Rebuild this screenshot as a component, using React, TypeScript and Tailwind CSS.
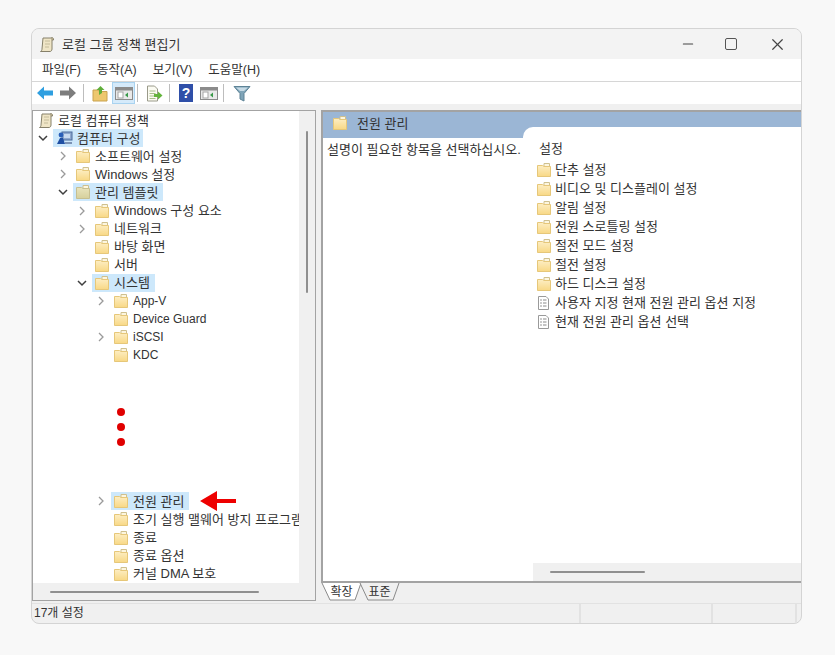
import React from "react";
import { Minus, X } from "lucide-react";

const Folder = ({ dim = false }: { dim?: boolean }) => (
  <svg width="16" height="16" viewBox="0 0 16 16" className="shrink-0">
    <defs>
      <linearGradient id="folderFill" x1="0" y1="0" x2="0" y2="1">
        <stop offset="0" stopColor="#fdeec4" />
        <stop offset="1" stopColor="#f8d885" />
      </linearGradient>
      <linearGradient id="folderDim" x1="0" y1="0" x2="0" y2="1">
        <stop offset="0" stopColor="#e9e4bd" />
        <stop offset="1" stopColor="#d6d09c" />
      </linearGradient>
    </defs>
    <path d="M8 1.5h5.5v3H8z" fill="#fdf6df" stroke="#cfc08e" />
    <path d="M1.5 3.5h5l1.5 1h6.5v10h-13z" fill={dim ? "url(#folderDim)" : "url(#folderFill)"} stroke={dim ? "#c6bf90" : "#e6c779"} />
  </svg>
);

const Scroll = () => (
  <svg width="17" height="17" viewBox="0 0 17 17" className="shrink-0">
    <path d="M5 2h9v11c0 1.5-1 2.5-2 2.5H2.5c1-.5 1.5-1.5 1.5-2.5z" fill="#efe5c6" stroke="#86806a" />
    <path d="M7 5h5M7 8h5M7 11h4" stroke="#c4bb9a" />
    <path d="M13.5 1.5c1.5 0 2 .8 2 2.5h-1.5" fill="#cfc49e" stroke="#86806a" />
  </svg>
);

const Computer = () => (
  <svg width="17" height="16" viewBox="0 0 17 16" className="shrink-0">
    <rect x="6" y="2" width="10" height="8" fill="#8fa9cf" stroke="#4a6a9c" />
    <rect x="8" y="4" width="6" height="4" fill="#c8daf0" />
    <path d="M1 14l3-6h3l2 6z" fill="#1f4fa3" />
    <circle cx="5" cy="5" r="2.4" fill="#2a5fb8" />
    <path d="M9 12h7v2H9z" fill="#7c93b5" />
  </svg>
);

const Policy = () => (
  <svg width="15" height="16" viewBox="0 0 15 16" className="shrink-0">
    <path d="M2.5 1.5h7.5l2.5 2.5v10.5h-10z" fill="#fff" stroke="#9a9a9a" />
    <path d="M4.5 5h1M4.5 8h1M4.5 11h1" stroke="#333" />
    <path d="M7 5h3.5M7 8h3.5M7 11h3.5" stroke="#8a8a8a" />
  </svg>
);

const Chevron = ({ open }: { open?: boolean }) => (
  <svg width="12" height="12" viewBox="0 0 12 12" className="shrink-0">
    {open ? (
      <path d="M2 4l4 4 4-4" fill="none" stroke="#3f3f3f" strokeWidth="1.5" />
    ) : (
      <path d="M4 2l4 4-4 4" fill="none" stroke="#9a9a9a" strokeWidth="1.3" />
    )}
  </svg>
);

const ArrowButton = ({ color, flip }: { color: string; flip?: boolean }) => (
  <svg width="18" height="14" viewBox="0 0 18 14" className={flip ? "rotate-180" : ""}>
    <path d="M1 7l7-6.5v4h9v5H8v4z" fill={color} />
  </svg>
);

const Sep = () => <div className="h-[18px] w-px bg-[#bdbdbd]" />;

const PanelIcon = ({ fill }: { fill: string }) => (
  <svg width="18" height="15" viewBox="0 0 18 15">
    <rect x="0.5" y="1.5" width="17" height="12" fill="#e9e9e9" stroke="#8b8b8b" />
    <path d="M1 2h16v2.5H1z" fill="#8b8b8b" />
    <rect x="3" y="6" width="5" height="6" fill="#fff" stroke="#a5a5a5" />
    <path d="M10 9l3-2.5v5z" fill={fill} />
  </svg>
);

const Toolbar = () => (
  <div className="flex h-[22px] shrink-0 items-center bg-white pl-[4px]">
    <ArrowButton color="#2f9fe0" />
    <div className="w-[5px]" />
    <ArrowButton color="#7d7d7d" flip />
    <div className="w-[6px]" />
    <Sep />
    <svg width="16" height="17" viewBox="0 0 16 17" className="ml-[8px]">
      <path d="M1 5h5l1 1.5h8V16H1z" fill="#edc76e" stroke="#c9a24f" />
      <path d="M7 10V5H4.5L8.5 1l4 4H10v3z" fill="#5fae3a" />
    </svg>
    <div className="ml-[4px] flex h-[22px] w-[23px] items-center justify-center border border-[#a9d3f0] bg-[#d5eafa]">
      <PanelIcon fill="#3a9a4a" />
    </div>
    <div className="w-[2px]" />
    <Sep />
    <svg width="17" height="17" viewBox="0 0 17 17" className="ml-[8px]">
      <path d="M1.5 1h7l3 3v12h-10z" fill="#fbfbf2" stroke="#9a9a8a" />
      <path d="M3.5 6h6M3.5 8.5h6M3.5 11h6M3.5 13.5h6" stroke="#a8bf8a" />
      <path d="M8 9h4V6.5l4.5 4-4.5 4V12H8z" fill="#63b53c" />
    </svg>
    <div className="w-[6px]" />
    <Sep />
    <div className="ml-[9px] flex h-[18px] w-[14px] items-center justify-center bg-[#2f4fa8] text-[14px] font-bold leading-none text-white">
      ?
    </div>
    <div className="w-[7px]" />
    <PanelIcon fill="#3a9a4a" />
    <div className="w-[5px]" />
    <Sep />
    <svg width="18" height="17" viewBox="0 0 18 17" className="ml-[9px]">
      <path d="M1 1.5h16L11 8.5V16l-4-2V8.5z" fill="#7fa4b8" stroke="#5e8396" />
      <path d="M3 2.5h12L11 6H7z" fill="#c8dbe6" />
    </svg>
  </div>
);

type TreeRow = { label: string; level: number; chevron?: "open" | "closed"; selected?: boolean; dim?: boolean; latin?: boolean };

const topRows: TreeRow[] = [
  { label: "소프트웨어 설정", level: 1, chevron: "closed" },
  { label: "Windows 설정", level: 1, chevron: "closed" },
  { label: "관리 템플릿", level: 1, chevron: "open", selected: true, dim: true },
  { label: "Windows 구성 요소", level: 2, chevron: "closed" },
  { label: "네트워크", level: 2, chevron: "closed" },
  { label: "바탕 화면", level: 2 },
  { label: "서버", level: 2 },
  { label: "시스템", level: 2, chevron: "open", selected: true },
  { label: "App-V", level: 3, chevron: "closed", latin: true },
  { label: "Device Guard", level: 3, latin: true },
  { label: "iSCSI", level: 3, chevron: "closed", latin: true },
  { label: "KDC", level: 3, latin: true },
];

const bottomRows: TreeRow[] = [
  { label: "전원 관리", level: 3, chevron: "closed", selected: true },
  { label: "조기 실행 맬웨어 방지 프로그램", level: 3 },
  { label: "종료", level: 3 },
  { label: "종료 옵션", level: 3 },
  { label: "커널 DMA 보호", level: 3 },
];

const indent: Record<number, string> = { 1: "pl-[24px]", 2: "pl-[43px]", 3: "pl-[62px]" };

const Row = ({ row }: { row: TreeRow }) => (
  <div className={`flex h-[18.1px] items-center whitespace-nowrap ${indent[row.level]}`}>
    <div className="w-[16px] shrink-0">{row.chevron && <Chevron open={row.chevron === "open"} />}</div>
    <div className={`flex h-[18px] items-center gap-[4px] pl-[2px] pr-[5px] ${row.selected ? "bg-[#cde8fb]" : ""}`}>
      <Folder dim={row.dim} />
      <span className={row.latin ? "text-[12px]" : ""}>{row.label}</span>
    </div>
  </div>
);

const listItems = ["단추 설정", "비디오 및 디스플레이 설정", "알림 설정", "전원 스로틀링 설정", "절전 모드 설정", "절전 설정", "하드 디스크 설정"];
const policyItems = ["사용자 지정 현재 전원 관리 옵션 지정", "현재 전원 관리 옵션 선택"];

const Tab = ({ label, active }: { label: string; active?: boolean }) => (
  <div className="relative flex h-[18px] w-[41px] shrink-0 items-center justify-center">
    <svg width="41" height="18" viewBox="0 0 41 18" className="absolute left-0 top-0">
      <path d="M1 0l8 17h25l6-17" fill={active ? "#fff" : "#f0f0f0"} stroke="#8a8a8a" />
    </svg>
    <span className="relative text-[12px]">{label}</span>
  </div>
);

export default function App() {
  return (
    <div className="h-[655px] w-[835px] overflow-hidden bg-[#f8f8f8] pl-[31px] pt-[28px] font-['Liberation_Sans','Noto_Sans_CJK_KR',sans-serif] text-[13px] leading-none text-[#333]">
      <div className="flex h-[596px] w-[771px] flex-col overflow-hidden rounded-lg border border-[#d4d4d4] bg-[#f0f0f0]">
        {/* Title bar */}
        <div className="flex h-[30px] shrink-0 items-center bg-[#f3f3f3] pl-[6px]">
          <Scroll />
          <span className="ml-[7px] flex-1">로컬 그룹 정책 편집기</span>
          <Minus size={16} strokeWidth={1.6} className="mr-[29px] text-[#444]" />
          <div className="mr-[31px] h-[12px] w-[12px] rounded-[2px] border-[1.5px] border-[#555]" />
          <X size={19} strokeWidth={1.5} className="mr-[14px] text-[#444]" />
        </div>

        {/* Menu */}
        <div className="flex h-[23px] shrink-0 items-center gap-[16px] border-b border-[#d6d6d6] bg-white pl-[10px] text-[12.5px]">
          <span>파일(F)</span>
          <span>동작(A)</span>
          <span>보기(V)</span>
          <span>도움말(H)</span>
        </div>

        <Toolbar />

        {/* Panes */}
        <div className="mt-[6px] flex h-[491px] shrink-0 gap-[5px]">
          <div className="flex w-[284px] shrink-0 flex-col border border-[#a3a3a3] bg-[#f0f0f0]">
            <div className="flex min-h-0 flex-1">
              <div className="w-[266px] overflow-hidden bg-white">
                <div className="flex h-[18.1px] items-center gap-[4px] whitespace-nowrap pl-[4px]">
                  <Scroll />
                  <span>로컬 컴퓨터 정책</span>
                </div>
                <div className="flex h-[18.1px] items-center pl-[4px]">
                  <div className="w-[16px]">
                    <Chevron open />
                  </div>
                  <div className="flex h-[18px] items-center gap-[4px] bg-[#cde8fb] pl-[3px] pr-[3px]">
                    <Computer />
                    <span>컴퓨터 구성</span>
                  </div>
                </div>
                {topRows.map((row) => (
                  <Row key={row.label} row={row} />
                ))}
                <div className="flex h-[128px] flex-col gap-[7px] pl-[84px] pt-[44px]">
                  <div className="h-[8px] w-[8px] rounded-full bg-[#e00000]" />
                  <div className="h-[8px] w-[8px] rounded-full bg-[#e00000]" />
                  <div className="h-[8px] w-[8px] rounded-full bg-[#e00000]" />
                </div>
                <div className="relative">
                  {bottomRows.map((row) => (
                    <Row key={row.label} row={row} />
                  ))}
                  <svg width="36" height="20" viewBox="0 0 36 20" className="absolute left-[167px] top-[-1px]">
                    <path d="M0 10L17 0v8h19v4H17v8z" fill="#ee0000" />
                  </svg>
                </div>
              </div>
              <div className="flex flex-1 justify-center pt-[20px]">
                <div className="h-[162px] w-[2px] rounded-full bg-[#8f8f8f]" />
              </div>
            </div>
            <div className="flex h-[17px] shrink-0 items-center pl-[17px]">
              <div className="h-[2px] w-[209px] rounded-full bg-[#8f8f8f]" />
            </div>
          </div>

          <div className="flex min-w-0 flex-1 flex-col">
            <div className="flex min-h-0 flex-1 flex-col border-l-2 border-t-2 border-[#a3a3a3] bg-white">
              <div className="flex h-[26px] shrink-0 bg-[#9bb6d5]">
                <div className="flex h-[15px] w-[200px] shrink-0 items-center gap-[9px] pl-[9px] pt-[7px]">
                  <Folder />
                  <span>전원 관리</span>
                </div>
                <div className="h-[11px] flex-1 self-end rounded-tl-[10px] bg-white" />
              </div>
              <div className="flex min-h-0 flex-1">
                <div className="w-[200px] shrink-0 whitespace-nowrap pl-[4px] pt-[5px]">설명이 필요한 항목을 선택하십시오.</div>
                <div className="flex min-w-0 flex-1 flex-col">
                  <div className="flex-1 pl-[13px]">
                    <div className="h-[22px] pl-[3px] pt-[4px]">설정</div>
                    {listItems.map((item) => (
                      <div key={item} className="flex h-[19px] items-center gap-[3px]">
                        <Folder />
                        <span>{item}</span>
                      </div>
                    ))}
                    {policyItems.map((item) => (
                      <div key={item} className="flex h-[19px] items-center gap-[3px]">
                        <Policy />
                        <span className="ml-[1px]">{item}</span>
                      </div>
                    ))}
                  </div>
                  <div className="ml-[10px] flex h-[18px] shrink-0 items-center bg-[#f0f0f0] pl-[17px]">
                    <div className="h-[2px] w-[95px] rounded-full bg-[#8f8f8f]" />
                  </div>
                </div>
              </div>
            </div>
            <div className="flex h-[20px] shrink-0 border-t-2 border-[#a3a3a3]">
              <Tab label="확장" active />
              <div className="-ml-[3px]">
                <Tab label="표준" />
              </div>
            </div>
          </div>
        </div>

        {/* Status bar */}
        <div className="mt-[2px] flex flex-1 border-t border-[#e2e2e2]">
          <div className="flex w-[549px] items-center border-r-2 border-[#e2e2e2] pb-[2px] pl-[2px] text-[12px]">17개 설정</div>
          <div className="w-[132px] border-r-2 border-[#e2e2e2]" />
          <div className="w-[84px] border-r-2 border-[#e2e2e2]" />
        </div>
      </div>
    </div>
  );
}
